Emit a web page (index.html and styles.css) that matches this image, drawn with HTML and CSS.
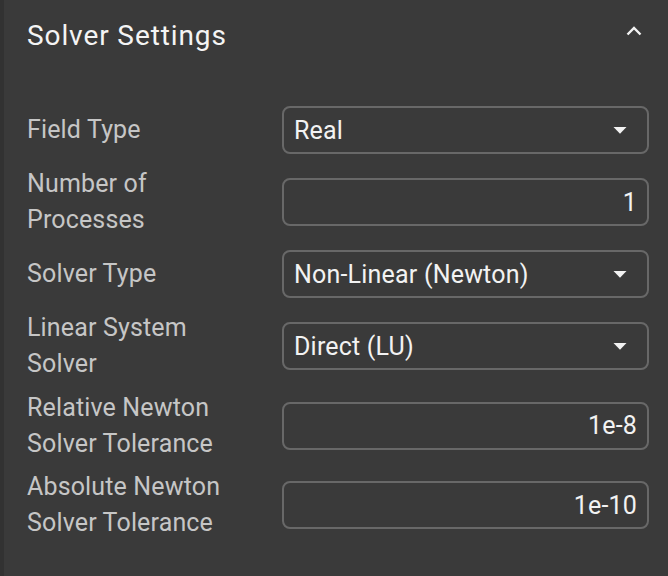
FILE: index.html
```html
<!DOCTYPE html>
<html>
<head>
<meta charset="utf-8">
<link rel="stylesheet" href="styles.css">
</head>
<body>
<div class="page">
  <div class="strip"></div>
  <div class="panel">
    <div class="header">
      <span class="title">Solver Settings</span>
      <svg class="chev" width="16" height="10" viewBox="0 0 16 10"><path d="M1.5 8.5 L8 2 L14.5 8.5" fill="none" stroke="#f2f2f2" stroke-width="2.4"/></svg>
    </div>
    <div class="rows">
      <div class="row">
        <div class="label">Field Type</div>
        <div class="box select"><span>Real</span><svg class="tri" width="14" height="7" viewBox="0 0 14 7"><path d="M0.5 0 L13.5 0 L7 6.8 Z" fill="#f2f2f2"/></svg></div>
      </div>
      <div class="row">
        <div class="label">Number of Processes</div>
        <div class="box num"><span>1</span></div>
      </div>
      <div class="row">
        <div class="label">Solver Type</div>
        <div class="box select"><span>Non-Linear (Newton)</span><svg class="tri" width="14" height="7" viewBox="0 0 14 7"><path d="M0.5 0 L13.5 0 L7 6.8 Z" fill="#f2f2f2"/></svg></div>
      </div>
      <div class="row">
        <div class="label">Linear System Solver</div>
        <div class="box select"><span>Direct (LU)</span><svg class="tri" width="14" height="7" viewBox="0 0 14 7"><path d="M0.5 0 L13.5 0 L7 6.8 Z" fill="#f2f2f2"/></svg></div>
      </div>
      <div class="row spaced">
        <div class="label">Relative Newton Solver Tolerance</div>
        <div class="box num"><span>1e-8</span></div>
      </div>
      <div class="row spaced">
        <div class="label">Absolute Newton Solver Tolerance</div>
        <div class="box num"><span>1e-10</span></div>
      </div>
    </div>
  </div>
</div>
</body>
</html>
```

FILE: styles.css
```css
html, body {
  margin: 0;
  padding: 0;
  background: #3a3a3a;
}
body {
  font-family: Roboto, "Liberation Sans", sans-serif;
  width: 668px;
  height: 576px;
  overflow: hidden;
}
.page {
  display: flex;
  height: 576px;
}
.strip {
  width: 4px;
  background: #323232;
  flex: none;
}
.panel {
  flex: 1;
  padding: 20px 19px 0 23px;
}
.header {
  display: flex;
  align-items: center;
  justify-content: space-between;
  height: 32px;
}
.title {
  font-size: 28px;
  line-height: 32px;
  color: #f4f4f4;
  letter-spacing: 0.9px;
}
.chev {
  margin-right: 7px;
  margin-top: -10px;
}
.rows {
  margin-top: 42px;
}
.row {
  display: grid;
  grid-template-columns: 200px 1fr;
  column-gap: 55px;
  align-items: center;
  min-height: 72px;
}
.row.spaced {
  margin-top: 7.5px;
}
.label {
  font-size: 25px;
  line-height: 36px;
  color: #c6c6c6;
  letter-spacing: 0.15px;
}
.box {
  box-sizing: border-box;
  height: 48px;
  border: 2px solid #686868;
  border-radius: 8px;
  display: flex;
  align-items: center;
  padding: 0 10px 0 10px;
  font-size: 25px;
  color: #f2f2f2;
  letter-spacing: 0.2px;
}
.select {
  justify-content: space-between;
  padding-right: 20px;
}
.num {
  justify-content: flex-end;
}
```
